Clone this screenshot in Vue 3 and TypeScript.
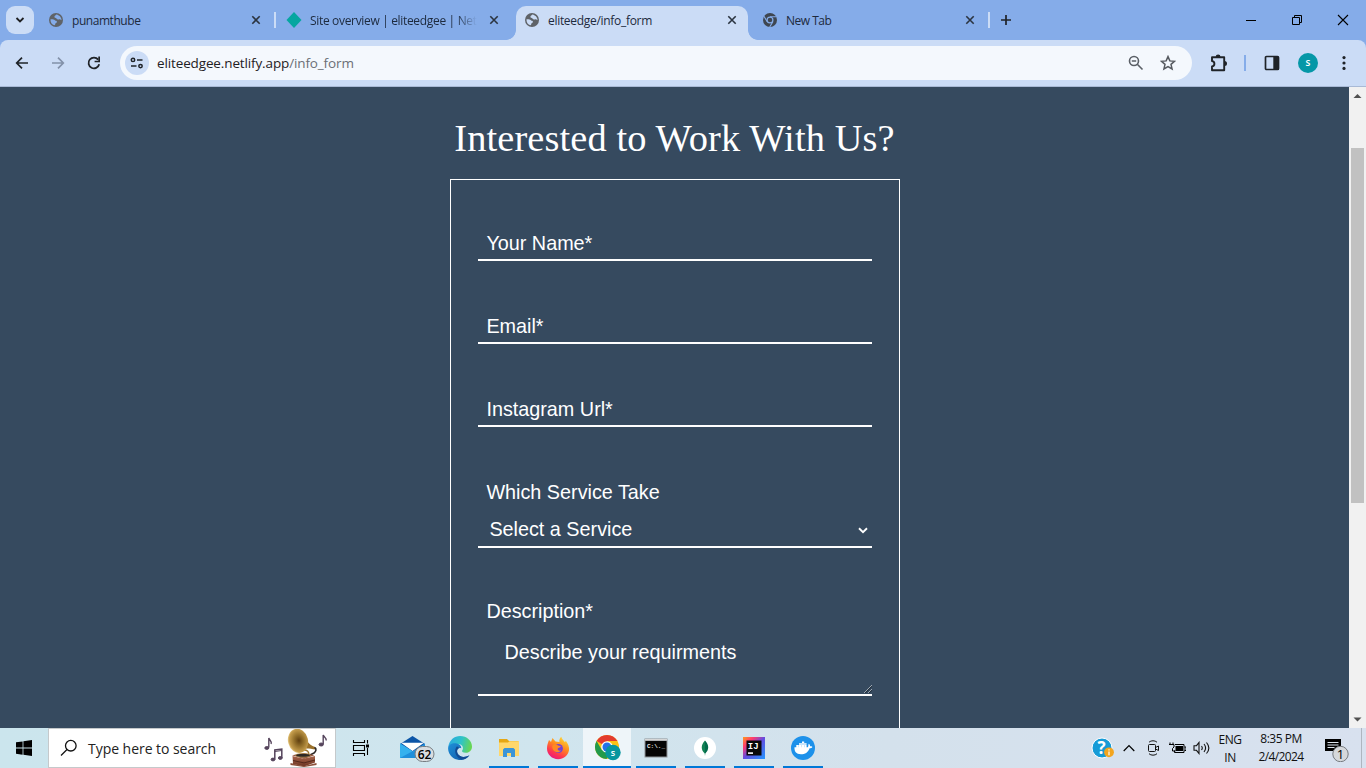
<script setup lang="ts">
interface Tab {
  title: string
  icon: 'globe' | 'netlify' | 'chrome'
  active?: boolean
  cls: string
}

const tabs: Tab[] = [
  { title: 'punamthube', icon: 'globe', cls: 't1' },
  { title: 'Site overview | eliteedgee | Netli', icon: 'netlify', cls: 't2' },
  { title: 'eliteedge/info_form', icon: 'globe', active: true, cls: 't3' },
  { title: 'New Tab', icon: 'chrome', cls: 't4' },
]

const fields: string[] = ['Your Name*', 'Email*', 'Instagram Url*']
</script>

<template>
  <div class="screen">
    <header class="tabstrip">
      <button class="tabsearch">
        <svg width="10" height="8" viewBox="0 0 10 8"><path d="M1.500 2 5 5.500 8.500 2" fill="none" stroke="#1f2023" stroke-width="1.800" /></svg>
      </button>
      <div v-for="tab in tabs" :key="tab.title" class="tab" :class="[tab.cls, { active: tab.active }]">
        <svg v-if="tab.icon === 'globe'" class="fav" width="14" height="14" viewBox="0 0 14 14">
          <circle cx="7" cy="7" r="7" fill="#5f6368" />
          <path :fill="tab.active ? '#cbdcf6' : '#85ace9'" d="M7.300 1.500c-.3 1-1.800 1-1.900 2.200C5.300 5 6.800 4.600 7.500 5.500c.5.8 1.400 1.200 2.300.9 1-.4 1.900.3 2.700.9.1-2.300-1.500-5.100-5.200-5.800zM1.500 6.300c1.700-.2 3.600.1 4.400 1 .6.700 2 .4 2.100 1.500.1 1.200-1.500 1-1.700 2-.1.700-.2 1.200-.9 1.500C2.900 11.700 1.200 9.300 1.500 6.300z" />
        </svg>
        <svg v-else-if="tab.icon === 'netlify'" class="fav wide" width="16" height="16" viewBox="0 0 16 16"><path d="M8 0 15.500 8 8 16 .5 8z" fill="#05a6a0" /></svg>
        <svg v-else class="fav" width="14" height="14" viewBox="0 0 14 14">
          <circle cx="7" cy="7" r="7" fill="#3e4650" />
          <path d="M7 3.700h6.400M4.200 8.700 1 3.200M9.900 8.600 6.700 14" stroke="#85ace9" stroke-width="1.100" fill="none" />
          <circle cx="7" cy="7" r="2.900" fill="#3e4650" stroke="#85ace9" stroke-width="1.200" />
        </svg>
        <span class="title">{{ tab.title }}</span>
        <svg class="close" width="10" height="10" viewBox="0 0 10 10"><path d="M1.300 1.300l7.400 7.400M8.700 1.300 1.300 8.700" stroke="#2b3440" stroke-width="1.600" /></svg>
      </div>
      <svg class="plus" width="12" height="12" viewBox="0 0 12 12"><path d="M6 1v10M1 6h10" stroke="#1f2328" stroke-width="1.700" /></svg>
      <div class="winbtns">
        <svg width="46" height="40" viewBox="0 0 46 40"><path d="M18 20.500h10" stroke="#000" /></svg>
        <svg width="46" height="40" viewBox="0 0 46 40"><path d="M18.500 17.500h7v7h-7zM20.500 17v-1.500h7v7H26" fill="none" stroke="#000" /></svg>
        <svg width="46" height="40" viewBox="0 0 46 40"><path d="M18 15l10 10M28 15 18 25" stroke="#000" stroke-width="1.100" /></svg>
      </div>
    </header>

    <div class="toolbar-back">
      <div class="toolbar">
        <svg class="nav" width="16" height="16" viewBox="0 0 16 16"><path d="M14 8H3M8 2.600 2.700 8 8 13.400" fill="none" stroke="#1f2328" stroke-width="1.700" /></svg>
        <svg class="nav" width="16" height="16" viewBox="0 0 16 16"><path d="M2 8h11M8 2.600 13.300 8 8 13.400" fill="none" stroke="#8391a9" stroke-width="1.700" /></svg>
        <svg class="nav" width="16" height="16" viewBox="0 0 16 16"><path d="M13.200 9.300A5.400 5.400 0 1 1 12.200 4.600" fill="none" stroke="#1f2328" stroke-width="1.800" /><path d="M14 1.500v5.700H8.600V5.700h3.700V1.500z" fill="#1f2328" /></svg>
        <div class="omnibox">
          <div class="site">
            <svg width="14" height="12" viewBox="0 0 14 12"><g fill="none" stroke="#1f2328" stroke-width="1.500"><circle cx="3" cy="2.900" r="1.700" /><path d="M7 2.900h5.500M1 9.100h5.500" /><circle cx="10.500" cy="9.100" r="1.700" /></g></svg>
          </div>
          <div class="url">eliteedgee.netlify.app<span>/info_form</span></div>
          <svg class="zoomi" width="16" height="16" viewBox="0 0 16 16"><g fill="none" stroke="#5a5f66" stroke-width="1.600"><circle cx="6" cy="6" r="4.500" /><path d="M9.300 9.300l5.200 5.200M3.800 6h4.400" /></g></svg>
          <svg class="star" width="16" height="16" viewBox="0 0 16 16"><path d="M8 1.600l1.850 4.300 4.650.4-3.500 3.050 1.050 4.550L8 11.500l-4.050 2.400L5 9.350 1.500 6.300l4.650-.4z" fill="none" stroke="#55595f" stroke-width="1.500" /></svg>
        </div>
        <svg class="puzzle" width="20" height="20" viewBox="0 0 20 20"><path d="M3 4.300h12.200v12.900H3v-3.700c3.200-.4 3.200-5.100 0-5.500z" fill="none" stroke="#1f2328" stroke-width="1.900" stroke-linejoin="round" /><path d="M6.700 4a2.400 2.400 0 0 1 4.800 0zM15.500 8a2.500 2.500 0 0 1 0 5z" fill="#1f2328" /></svg>
        <i class="vsep"></i>
        <svg class="panel" width="16" height="16" viewBox="0 0 16 16"><rect x="1.500" y="1.500" width="13" height="13" rx="1" fill="none" stroke="#1f2328" stroke-width="1.700" /><path d="M9.300 1.500h5.200v13H9.300z" fill="#1f2328" /></svg>
        <span class="avatar">s</span>
        <svg class="dots" width="4" height="16" viewBox="0 0 4 16"><g fill="#1f2328"><circle cx="2" cy="2.600" r="1.600" /><circle cx="2" cy="8" r="1.600" /><circle cx="2" cy="13.400" r="1.600" /></g></svg>
      </div>
    </div>

    <main class="page">
      <div class="content">
        <h1>Interested to Work With Us?</h1>
        <form class="form">
          <div v-for="f in fields" :key="f" class="field"><label>{{ f }}</label></div>
          <div class="field select">
            <label>Which Service Take</label>
            <div class="picker">
              <span>Select a Service</span>
              <svg width="10" height="7" viewBox="0 0 10 7"><path d="M1 1.300l4 3.800 4-3.800" fill="none" stroke="#fff" stroke-width="1.900" /></svg>
            </div>
          </div>
          <div class="field area">
            <label>Description*</label>
            <div class="box">
              <span>Describe your requirments</span>
              <svg width="8" height="8" viewBox="0 0 8 8"><path d="M0 8 8 0M4 8l4-4" stroke="#e8eaec" stroke-width=".6" /><path d="M1.200 8 8 1.200M5.200 8 8 5.200" stroke="#1c2630" stroke-width=".9" /></svg>
            </div>
          </div>
        </form>
      </div>
      <div class="scroll">
        <svg width="17" height="17" viewBox="0 0 17 17"><path d="M4.500 11h8L8.500 7z" fill="#505050" /></svg>
        <i></i>
        <svg class="down" width="17" height="17" viewBox="0 0 17 17"><path d="M4.500 6.500h8l-4 4z" fill="#505050" /></svg>
      </div>
    </main>

    <footer class="taskbar">
      <div class="start">
        <svg width="16" height="16" viewBox="0 0 16 16"><path d="M0 2.300 6.600 1.400V7.600H0zM7.400 1.300 16 0v7.600H7.400zM0 8.400h6.600v6.300L0 13.800zM7.400 8.400H16V16l-8.600-1.200z" fill="#000" /></svg>
      </div>
      <div class="search">
        <svg class="mag" width="18" height="18" viewBox="0 0 18 18"><circle cx="10.800" cy="6.700" r="5.300" fill="none" stroke="#111" stroke-width="1.300" /><path d="M7 10.500 1 16.500" stroke="#111" stroke-width="1.300" /></svg>
        <span>Type here to search</span>
        <svg class="gram" width="66" height="38" viewBox="0 0 66 38">
          <defs>
            <radialGradient id="horn" cx=".55" cy=".5" r=".6"><stop offset="0" stop-color="#5f3f10" /><stop offset=".4" stop-color="#94702a" /><stop offset=".78" stop-color="#c49c4c" /><stop offset=".93" stop-color="#ecd391" /><stop offset="1" stop-color="#a47627" /></radialGradient>
            <linearGradient id="wood" x2="0" y2="1"><stop stop-color="#a9644a" /><stop offset="1" stop-color="#6b3423" /></linearGradient>
          </defs>
          <g fill="#55445c" stroke="#55445c">
            <ellipse cx="3.800" cy="19" rx="2" ry="1.400" /><path d="M5.800 18.500V9c.5 2.300 3.500 3 2.300 6" fill="none" stroke-width="1.400" />
            <ellipse cx="10" cy="30.500" rx="1.900" ry="1.400" /><ellipse cx="17.300" cy="29" rx="1.900" ry="1.400" /><path d="M11.800 30.500v-9.500l7-1v9" fill="none" stroke-width="1.500" /><path d="M11.800 22.500l7-1" />
            <ellipse cx="58.200" cy="15.500" rx="2.200" ry="1.500" /><path d="M60.200 15V6c.5 2.300 3.800 3 2.800 5.500" fill="none" stroke-width="1.400" />
          </g>
          <path d="M40 3.500c3 7 5 12 12 14.500l.5 2.500c-6-1-11-2-14.500.5z" fill="#9a7029" />
          <path d="M51.500 18.500c2.500 1 1.500 4-.5 5.500l-4 2" fill="none" stroke="#2f2a28" stroke-width="1.600" />
          <path d="M41 21c3 0 5 2 5 5" fill="none" stroke="#9c7532" stroke-width="1.300" />
          <ellipse cx="35" cy="11.800" rx="10" ry="12.200" transform="rotate(-14 35 11.800)" fill="url(#horn)" />
          <path d="M29 26.300l12-2.300 10.500 2.300L41 30z" fill="#96573f" />
          <ellipse cx="40" cy="26.300" rx="7.500" ry="1.900" fill="#2d2825" stroke="#c9a058" stroke-width=".6" />
          <path d="M29.500 27l11 2.700 11.500-2.700v6.500L41 37.500l-11-2.500z" fill="url(#wood)" />
          <path d="M30 31.500l11 2.400 11-2.900" fill="none" stroke="#54281b" />
          <path d="M27.500 34l13.500 3 12.500-3v2L41 38l-13.500-2z" fill="#8b513b" />
        </svg>
      </div>
      <div class="app taskview">
        <svg width="18" height="16" viewBox="0 0 18 16"><g fill="none" stroke="#000" stroke-width="1.100"><path d="M1.500 0v2.500h11V0M1.500 16v-2.500h11V16M1.500 5.500h11v5h-11zM1.500 5v6M15.500 0v3.500M15.500 8v7" /></g><path d="M14 4.500h3v3h-3z" /></svg>
      </div>
      <div class="app mail">
        <svg width="40" height="32" viewBox="0 0 40 32">
          <path d="M4 12 16.500 4 29 12 16.500 20z" fill="#0b55a7" /><path d="M5 10.800h23L16.500 19z" fill="#fff" />
          <path d="M4 11.500l13 8 12-8V26H4z" fill="#1f8fdb" /><path d="M4 11.500l12.500 7.700L4 26z" fill="#35b1ee" />
          <rect x="19" y="14.500" width="19" height="15" rx="7.500" fill="#d9dde0" stroke="#777d82" />
          <text x="28.500" y="26.500" text-anchor="middle" class="badge">62</text>
        </svg>
      </div>
      <div class="app">
        <svg width="24" height="24" viewBox="0 0 24 24">
          <defs><linearGradient id="ed1" x1="0" y1=".2" x2="1" y2=".4"><stop stop-color="#2aa7e0" /><stop offset=".55" stop-color="#2fc3c8" /><stop offset="1" stop-color="#68d653" /></linearGradient><linearGradient id="ed2" x2="1" y2="1"><stop stop-color="#1e8fd8" /><stop offset="1" stop-color="#1257a5" /></linearGradient></defs>
          <path d="M.2 11C1.300 4 6.500.1 12 .1c7 0 12 4.900 12 10.400 0 4-3 6.300-6.300 6.300-3 0-4.200-1.200-3.500-2.200 2.200-3.200-.5-6.600-4.200-6.600-4.300 0-8 1.300-9.800 3z" fill="url(#ed1)" />
          <path d="M.1 12C.6 8.500 5 6.300 9 7.600c3 .9 4.500 3 4.200 4.700-3-1.300-5.200 2-3.600 5.200 2.100 4 7.400 4.300 11.800 1.700-3.200 4.600-8.600 5.600-12.400 4.400C3.500 22 0 17.500.1 12z" fill="url(#ed2)" />
          <path d="M8.800 10.500c-3.300 4-1.300 10.500 4 12.800 3 .8 6.500-1.300 8.600-4.100-4.400 2.600-9.700 2.300-11.800-1.700-1.200-2.400-.3-4.800 1.200-5.300 0-1-.7-1.800-2-1.700z" fill="#134b93" />
        </svg>
      </div>
      <div class="app run">
        <svg width="22" height="20" viewBox="0 0 22 20"><path d="M1 1h8l2 2h9.500v4H1z" fill="#e5a714" /><path d="M1 4.500h9l1.500-1.200h9.500V18H1z" fill="#ffd76b" /><path d="M5 19v-7.500L6.500 10h9l1.500 1.500V19h-4v-4H9v4z" fill="#3b95d8" /></svg>
      </div>
      <div class="app run">
        <svg width="24" height="24" viewBox="0 0 24 24">
          <defs><linearGradient id="ff" x1=".8" x2=".25" y2="1"><stop stop-color="#ffe13a" /><stop offset=".42" stop-color="#ff8a1f" /><stop offset=".75" stop-color="#ff3650" /><stop offset="1" stop-color="#e31587" /></linearGradient></defs>
          <path d="M3 4l2 2 1.500-4 3 3.500L13.500 6c-.5-2 .3-4.300 1.800-5.300.5 2.600 2.500 3.600 3.700 5.600l.8-1.600c2.400 3.200 3.700 6.500 3.200 9.500-1 5.500-5.500 9-10.800 9C6 23.200 1 18.500 1 12.500 1 9 2 6.500 3 4z" fill="url(#ff)" />
          <circle cx="12.300" cy="12.500" r="4.600" fill="#7542d5" /><path d="M6.500 9.500c2-2 4-1.500 5.500 0l3 .7c-.8 1.300-2 1.200-3 2-1.200 1.200.5 3 3 2.300-1.300 2-4.500 2.500-6.500.8S5.800 11 6.500 9.500z" fill="#ff8a24" />
        </svg>
      </div>
      <div class="app run current">
        <svg width="30" height="30" viewBox="0 0 30 30">
          <circle cx="15" cy="14" r="12" fill="#fbc116" />
          <path d="M15 14 4.600 8A12 12 0 0 1 25.400 8H15z" fill="#e33b2e" /><path d="M4.600 8A12 12 0 0 0 14.500 26L20 17l-5-3-5.200 3z" fill="#229a4b" />
          <circle cx="15" cy="14" r="5.800" fill="#fff" /><circle cx="15" cy="14" r="4.500" fill="#2472e8" />
          <circle cx="21" cy="19.500" r="7.700" fill="#07959e" /><text x="21" y="23" text-anchor="middle" class="prof">s</text>
        </svg>
      </div>
      <div class="app run">
        <svg width="24" height="20" viewBox="0 0 24 20"><rect x=".5" y=".5" width="23" height="19" fill="#8d9296" /><path d="M1 1h22v1.500H1z" fill="#d6d6d6" /><path d="M1.500 3h21v15.500h-21z" fill="#050505" /><text x="3" y="9.500" class="cmd">C:\._</text></svg>
      </div>
      <div class="app run">
        <svg width="22" height="22" viewBox="0 0 22 22"><circle cx="11" cy="11" r="11" fill="#fff" /><path d="M11 3.500c4.500 4.500 4 9.500.3 13l-.3 2.500z" fill="#026b4b" /><path d="M11 3.500c-4.500 4.500-4 9.500-.3 13l.3 2.500z" fill="#128154" /></svg>
      </div>
      <div class="app run">
        <svg width="22" height="22" viewBox="0 0 22 22">
          <defs><linearGradient id="ij" x2="1" y2="1"><stop stop-color="#ff9b1a" /><stop offset=".25" stop-color="#ff3b70" /><stop offset=".5" stop-color="#644de0" /><stop offset="1" stop-color="#2297ff" /></linearGradient></defs>
          <rect width="22" height="22" fill="url(#ij)" /><path d="M3.500 3.500h15v15h-15z" fill="#090909" /><text x="4.800" y="11.500" class="ijt">IJ</text><path d="M5 15.300h5v1.600H5z" fill="#fff" />
        </svg>
      </div>
      <div class="app run">
        <svg width="24" height="24" viewBox="0 0 24 24"><circle cx="12" cy="12" r="12" fill="#1d91ea" /><path d="M3.500 11.300h13.200c1-.8.3-2 1-3.500 1.300.6 1.300 1.700 1.400 2.400 1 0 1.800.1 2.300.7-.7 1.100-1.700 1.300-2.800 1.300C17 16.500 14 18.300 10 18.300c-5 0-6.800-3-6.500-7zM5.300 9h2.500v2.500H5.300zM8 9h2.500v2.500H8zM10.700 9h2.500v2.500h-2.500zM13.400 9h2.200v2.500h-2.200zM8 7.300h7.600v1.500H8zM11 5.500h2.200v1.500H11z" fill="#fff" /></svg>
      </div>
      <div class="tray">
        <svg class="help" width="24" height="24" viewBox="0 0 24 24"><circle cx="11" cy="12" r="10" fill="#169bd7" stroke="#fff" /><text x="10.500" y="18" text-anchor="middle" class="q">?</text><circle cx="18" cy="16.300" r="4.900" fill="#f3a51e" /><path d="M18 13.200v1.300M18 15.400v3.800" stroke="#fff" stroke-width="1.200" /></svg>
        <svg class="up" width="12" height="8" viewBox="0 0 12 8"><path d="M.7 7 6 1.500 11.300 7" fill="none" stroke="#000" stroke-width="1.200" /></svg>
        <svg class="cam" width="12" height="16" viewBox="0 0 12 16"><g fill="none" stroke="#111"><rect x=".5" y="4.500" width="7" height="7" rx="1" /><path d="M7.500 7.500l3-1.500v4.500l-3-1.500M1 2.300C3 .3 7 .3 9 2.300M1 13.700c2 2 6 2 8 0" /></g></svg>
        <svg class="bat" width="17" height="12" viewBox="0 0 17 12"><path d="M6 2.500h9v8H5.500v-2M15.500 5H17v3.500h-1.500" fill="none" stroke="#000" /><path d="M6.500 4h7.500v5H6.500z" /><path d="M0 2.500h5v2.500L3.500 6.500V9h3M1 .5V3M4 .5V3" fill="none" stroke="#000" /></svg>
        <svg class="vol" width="18" height="14" viewBox="0 0 18 14"><g fill="none" stroke="#111" stroke-width="1.100"><path d="M1 4.700h2.500L6 1.500v11L3.500 9.300H1zM8.500 5c1 1.300 1 2.700 0 4M11 3c2 2.500 2 5.500 0 8M13.500 1.500c3 3.500 3 7.500 0 11" /></g></svg>
        <div class="two lang"><span>ENG</span><span>IN</span></div>
        <div class="two clock"><span>8:35 PM</span><span class="date">2/4/2024</span></div>
        <svg class="note" width="28" height="28" viewBox="0 0 28 28"><path d="M1 5h16v12h-4v3l-3-3H1z" fill="#000" /><path d="M3.500 8.500h11M3.500 11h11M3.500 13.500h7" stroke="#dce4ee" stroke-width="1" /><circle cx="16.500" cy="20" r="7.700" fill="#d5d8db" stroke="#777b80" /><text x="16.500" y="25" text-anchor="middle" class="n1">1</text></svg>
      </div>
      <i class="desk"></i>
    </footer>
  </div>
</template>

<style>
html, body { margin: 0; overflow: hidden; }
</style>

<style scoped>
* { box-sizing: border-box; }
svg { display: block; flex: none; }
.screen { width: 1366px; height: 768px; display: flex; flex-direction: column; overflow: hidden; font-family: "Open Sans", "Noto Sans", sans-serif; }
.tabstrip { height: 40px; flex: none; background: #85ace9; display: flex; align-items: flex-end; }
.tabsearch { width: 28px; height: 28px; margin: 0 6px 6px; border: 0; padding: 0; border-radius: 9px; background: #cbdcf6; display: flex; align-items: center; justify-content: center; }
.tab { width: 232px; height: 34px; margin-right: 6px; flex: none; display: flex; align-items: center; padding: 0 11px 6px 9px; position: relative; color: #1d2a3d; }
.tab.active { background: #cbdcf6; border-radius: 10px 10px 0 0; }
.tab.active::before, .tab.active::after { content: ""; position: absolute; bottom: 0; width: 10px; height: 10px; }
.tab.active::before { left: -10px; background: radial-gradient(circle at 0 0, transparent 9.500px, #cbdcf6 10.200px); }
.tab.active::after { right: -10px; background: radial-gradient(circle at 100% 0, transparent 9.500px, #cbdcf6 10.200px); }
.t1::after, .t4::after { content: ""; position: absolute; right: -4px; top: 6px; width: 2px; height: 16px; background: #cbdcf6; }
.fav { margin-right: 9px; }
.fav.wide { margin: 0 8px 0 -1px; }
.title { font-size: 12px; line-height: 18px; padding-top: 2px; flex: 1; min-width: 0; white-space: nowrap; letter-spacing: -.45px; }
.t2 .title { letter-spacing: -.33px; margin-right: 12px; -webkit-mask-image: linear-gradient(90deg, #000 146px, transparent 167px); mask-image: linear-gradient(90deg, #000 146px, transparent 167px); }
.t3 .title { letter-spacing: -.3px; }
.t4 .title { letter-spacing: -.5px; }
.plus { margin: 0 0 14px 8px; }
.winbtns { display: flex; margin-left: auto; }

.toolbar-back { background: #85ace9; flex: none; }
.toolbar { height: 47px; background: #cbdcf6; border-bottom: 1px solid #a9bad6; border-radius: 8px 8px 0 0; display: flex; align-items: center; padding-left: 14px; }
.nav { margin-right: 20px; }
.omnibox { width: 1072px; height: 34px; margin-left: -2px; border-radius: 17px; background: #f4f8fd; display: flex; align-items: center; padding: 0 16px 0 5px; flex: none; }
.site { width: 24px; height: 24px; border-radius: 50%; background: #cbdcf6; display: flex; align-items: center; justify-content: center; margin-right: 8px; }
.url { font-size: 13.500px; line-height: 20px; letter-spacing: -.13px; color: #1f2023; flex: 1; }
.url span { color: #6b6f76; }
.zoomi { margin-right: 16px; }
.puzzle { margin-left: 17px; }
.vsep { width: 2px; height: 16px; background: #85ace9; margin: 0 18px 0 15px; }
.panel { margin-right: 18px; }
.avatar { width: 20px; height: 20px; border-radius: 50%; background: #0597a7; color: #fff; font: 600 10px/19px "Open Sans", sans-serif; text-align: center; }
.dots { margin-left: 24px; }

.page { height: 641px; flex: none; display: flex; background: #364a5f; overflow: hidden; }
.content { width: 1349px; height: 641px; display: flex; flex-direction: column; align-items: center; color: #fff; }
h1 { margin: 29px 0 0; height: 63px; flex: none; font: 400 38.400px/44px "Liberation Serif", serif; letter-spacing: .11px; white-space: nowrap; }
.form { width: 450px; height: 600px; flex: none; margin-left: 1px; border: 1px solid #fff; padding: 0 27px; font: 19.800px/24px "Liberation Sans", Arial, sans-serif; }
.field { height: 83px; border-bottom: 2px solid #fff; display: flex; flex-direction: column; justify-content: flex-end; padding-bottom: 4px; }
.field:first-child { height: 81px; }
.field label { padding-left: 8.400px; }
.field.select { height: 121px; padding-bottom: 5px; gap: 13px; }
.picker { display: flex; align-items: center; justify-content: space-between; padding: 0 4px 0 11.400px; }
.picker svg { margin-top: 2px; }
.field.area { height: 148px; padding-bottom: 0; gap: 17px; }
.box { height: 54px; display: flex; justify-content: space-between; padding-left: 26.500px; }
.box svg { align-self: flex-end; margin-bottom: 1px; }
.scroll { width: 17px; height: 641px; background: #f1f1f1; display: flex; flex-direction: column; align-items: center; }
.scroll i { width: 13px; height: 355px; margin-top: 44px; background: #c1c1c1; }
.down { margin-top: auto; }

.taskbar { height: 40px; flex: none; display: flex; background: linear-gradient(90deg, #cbe5ed, #d0e5ee 40%, #d4e1ec 65%, #d8e1ef); }
.start { width: 48px; display: flex; align-items: center; justify-content: center; }
.search { width: 288px; height: 40px; border: 1px solid #c5c9cb; background: #fff; display: flex; align-items: center; padding-left: 11px; margin-right: 2px; color: #222; }
.search span { font-size: 14px; margin-left: 10px; width: 175px; white-space: nowrap; letter-spacing: -.04px; }
.app { width: 48px; margin-right: 1px; height: 40px; display: flex; align-items: center; justify-content: center; flex: none; }
.taskview { padding-right: 3px; }
.mail { padding-left: 9px; }
.run { background: linear-gradient(#0078d7, #0078d7) 50% 100% / 40px 2px no-repeat; }
.current { background: linear-gradient(#0078d7, #0078d7) 50% 100% / 48px 2px no-repeat, #eef5f9; }
.badge { font: 600 12px "Open Sans", sans-serif; }
.prof { font: 600 9px "Open Sans", sans-serif; fill: #fff; }
.cmd { font: 700 6px "Liberation Mono", monospace; fill: #eee; }
.ijt { font: 700 9px "Liberation Mono", monospace; fill: #fff; }
.q { font: 700 17px "Open Sans", sans-serif; fill: #fff; }
.n1 { font: 400 13px "Open Sans", sans-serif; }
.tray { margin-left: auto; display: flex; align-items: center; }
.help { margin-right: 8px; }
.up { margin-right: 13px; }
.cam { margin-right: 9px; }
.bat { margin-right: 7px; }
.vol { margin-right: 4px; }
.two { display: flex; flex-direction: column; align-items: center; font-size: 12px; line-height: 18px; color: #111; white-space: nowrap; padding-bottom: 1px; }
.two span { letter-spacing: -.5px; }
.lang { width: 30px; padding: 2px 0 0; }
.clock { width: 72px; margin-right: 7px; }
.clock .date { letter-spacing: -.6px; }
.note { margin-right: 9px; }
.desk { width: 1px; height: 40px; background: #aeb6c0; margin-right: 4px; }
</style>
